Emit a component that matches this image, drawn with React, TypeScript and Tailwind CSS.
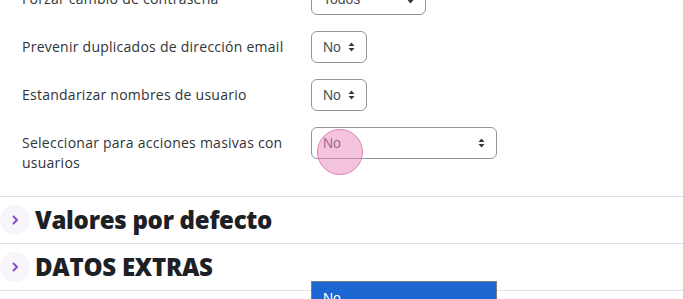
import React from 'react';

interface RowProps {
  label: string;
  value: string;
  width: number;
}

const Arrows = () => (
  <svg width="7" height="10" viewBox="0 0 7 10" className="shrink-0">
    <path d="M3.5 0.5 L6.5 4 H0.5 Z" fill="#343a40" />
    <path d="M3.5 9.5 L6.5 6 H0.5 Z" fill="#343a40" />
  </svg>
);

const SelectBox: React.FC<{ value: string; width: number }> = ({ value, width }) => (
  <div
    className="flex h-8 shrink-0 items-center justify-between rounded-md border border-[#8f959e] bg-white pl-[11px] pr-[11px] font-['Liberation_Sans',Arial,sans-serif] text-[14px] text-[#495057]"
    style={{ width }}
  >
    <span>{value}</span>
    <Arrows />
  </div>
);

const Row: React.FC<RowProps> = ({ label, value, width }) => (
  <div className="flex">
    <div className="w-[311px] shrink-0 pl-[22px] pr-4 pt-[6px] text-[14px] leading-[20px] tracking-[0.25px] text-[#2f3438]">
      {label}
    </div>
    <SelectBox value={value} width={width} />
  </div>
);

const Section: React.FC<{ title: string; last?: boolean }> = ({ title, last }) => (
  <div
    className={`flex items-center gap-[5px] border-t border-[#dee2e6] ${
      last ? 'h-[48px] border-b' : 'h-[47px]'
    }`}
  >
    <div className="flex h-[30px] w-[30px] items-center justify-center rounded-full bg-[#f8f5fa]">
      <svg width="8" height="12" viewBox="0 0 8 12">
        <polyline points="2.5,2.5 6,6 2.5,9.5" fill="none" stroke="#8550c4" strokeWidth="2" strokeLinecap="round" strokeLinejoin="round" />
      </svg>
    </div>
    <h3 className="text-[24px] font-extrabold leading-none tracking-[-0.25px] text-[#1d2125]">{title}</h3>
  </div>
);

export default function App() {
  return (
    <div className="relative h-[299px] w-full overflow-hidden bg-white font-['Open_Sans',sans-serif]">
      <div className="-mt-[17px] flex flex-col gap-4">
        <Row label="Forzar cambio de contraseña" value="Todos" width={115} />
        <Row label="Prevenir duplicados de dirección email" value="No" width={56} />
        <Row label="Estandarizar nombres de usuario" value="No" width={56} />
        <Row label="Seleccionar para acciones masivas con usuarios" value="No" width={186} />
      </div>

      <div className="mt-[23px]">
        <Section title="Valores por defecto" />
        <Section title="DATOS EXTRAS" last />
      </div>

      {/* touch indicator */}
      <div className="absolute left-[317px] top-[129px] h-[46px] w-[46px] rounded-full border border-[#e27fb4] bg-[#e989bb]/50" />

      {/* open native dropdown */}
      <div className="absolute left-[311px] top-[281px] h-[40px] w-[186px] border border-[#7d7d7d] bg-[#1b66d0] pl-[11px] pt-[6px] font-['Liberation_Sans',Arial,sans-serif] text-[14px] text-white">
        No
      </div>
    </div>
  );
}
